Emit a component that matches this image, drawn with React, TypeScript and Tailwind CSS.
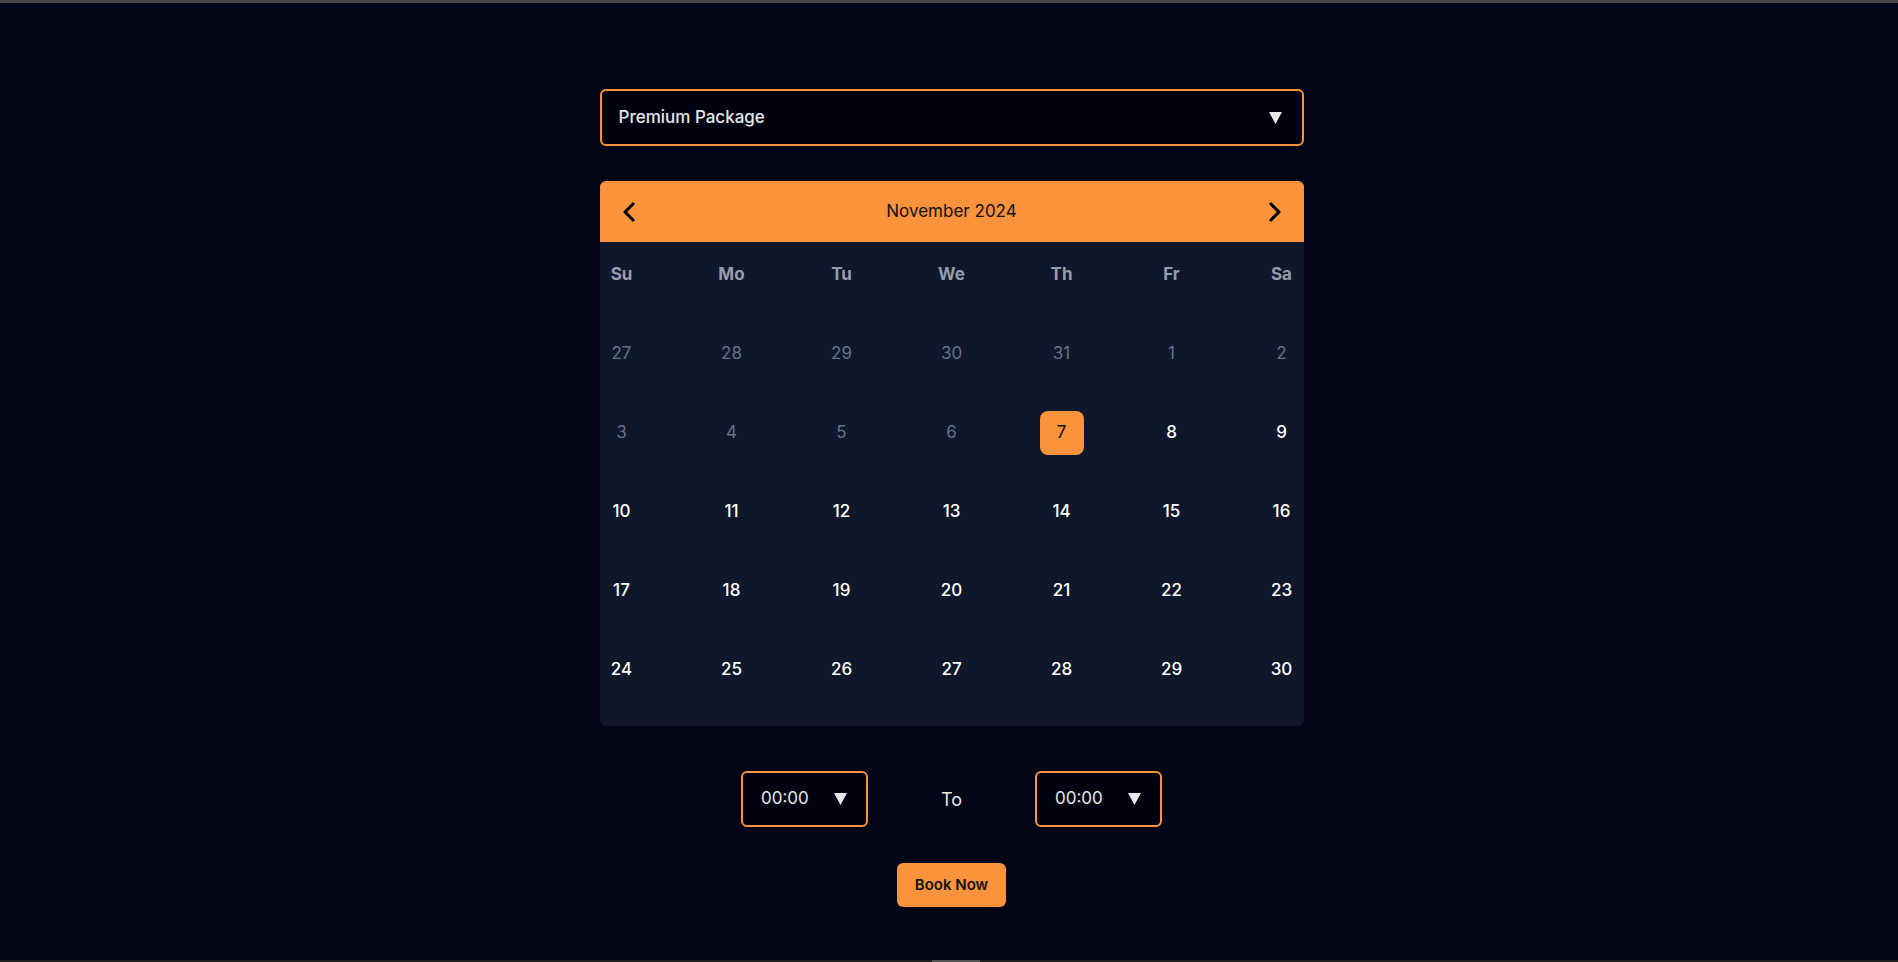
import { ChevronLeft, ChevronRight } from 'lucide-react'

type Day = { label: number; muted: boolean; selected?: boolean }

const weekdays = ['Su', 'Mo', 'Tu', 'We', 'Th', 'Fr', 'Sa']

// November 2024 grid, leading days from October; dates before the 7th are greyed out
const buildWeeks = (): Day[][] => {
  const days: Day[] = []
  for (let d = 27; d <= 31; d++) days.push({ label: d, muted: true })
  for (let d = 1; d <= 30; d++) days.push({ label: d, muted: d < 7, selected: d === 7 })
  const weeks: Day[][] = []
  for (let i = 0; i < days.length; i += 7) weeks.push(days.slice(i, i + 7))
  return weeks
}

function Caret({ className = '' }: { className?: string }) {
  return (
    <svg width="13" height="12" viewBox="0 0 13 12" className={className}>
      <polygon points="0,0 13,0 6.5,12" fill="#e5e7eb" />
    </svg>
  )
}

function TimeSelect() {
  return (
    <div className="flex h-[56px] w-[127px] items-center justify-between rounded-md border-2 border-[#fb923c] bg-[#00030f] pl-[18px] pr-[19px]">
      <span className="text-[17px] text-gray-200">00:00</span>
      <Caret />
    </div>
  )
}

export default function App() {
  const weeks = buildWeeks()

  return (
    <div
      className="flex h-screen flex-col bg-[#010515]"
      style={{ fontFamily: "Inter, 'Noto Sans', sans-serif" }}
    >
      <div className="h-[3px] bg-[#474747]" />

      <main className="flex flex-1 flex-col items-center pl-[5px] pt-[86px]">
        <div className="flex h-[57px] w-[704px] items-center justify-between rounded-md border-2 border-[#fb923c] bg-[#00030f] pl-[17px] pr-[20px]">
          <span className="text-[17px] font-medium text-gray-200">Premium Package</span>
          <Caret />
        </div>

        <div className="mt-[35px] w-[704px] overflow-hidden rounded-md bg-[#0f172a]">
          <div className="flex h-[61px] items-center justify-between bg-[#fb923c] px-[13px]">
            <ChevronLeft size={32} strokeWidth={2.3} className="text-black" />
            <span className="text-[17px] text-[#111]">November 2024</span>
            <ChevronRight size={32} strokeWidth={2.3} className="text-black" />
          </div>

          <div className="pb-[17px]">
            <div className="flex h-[66px] items-center justify-between">
              {weekdays.map((w) => (
                <div key={w} className="flex w-11 justify-center text-[17px] font-bold text-[#959dae]">
                  {w}
                </div>
              ))}
            </div>

            <div className="mt-[6px]">
              {weeks.map((week, i) => (
                <div key={i} className="flex h-[79px] items-center justify-between">
                  {week.map((day, j) => (
                    <div
                      key={j}
                      className={`flex h-11 w-11 items-center justify-center rounded-lg text-[17px] ${
                        day.selected
                          ? 'bg-[#fb923c] text-[#111]'
                          : day.muted
                            ? 'text-[#64748b]'
                            : 'font-medium text-white'
                      }`}
                    >
                      {day.label}
                    </div>
                  ))}
                </div>
              ))}
            </div>
          </div>
        </div>

        <div className="mt-[45px] flex items-center gap-[73px]">
          <TimeSelect />
          <span className="text-[18px] text-gray-200">To</span>
          <TimeSelect />
        </div>

        <button className="mt-[36px] h-11 rounded-md bg-[#fb923c] px-[18px] text-[15px] font-semibold text-[#111]">
          Book Now
        </button>
      </main>

      <div className="h-[2px] bg-[#1e1e1e] pl-[932px]">
        <div className="h-full w-[48px] bg-[#555]" />
      </div>
    </div>
  )
}
